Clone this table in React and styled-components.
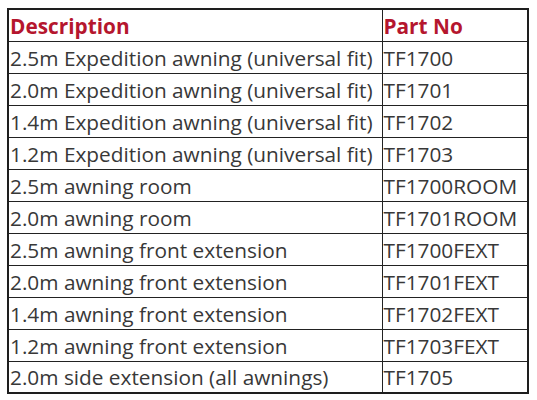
import styled, { createGlobalStyle } from 'styled-components';

const Global = createGlobalStyle`
  body {
    margin: 0;
    background: #ffffff;
    font-family: "Open Sans", "Liberation Sans", sans-serif;
  }
`;

const Page = styled.div`
  padding: 8px 0 0 7px;
`;

const Table = styled.table`
  border-collapse: collapse;
  border: 2px solid #1e1e1e;
  table-layout: fixed;
  width: 520px;
`;

const Col = styled.col`
  width: ${p => p.w}px;
`;

const Cell = styled.td`
  border: 1.5px solid #222;
  height: 32px;
  padding: 2px 0 0 1px;
  box-sizing: border-box;
  font-size: 20.8px;
  line-height: 1;
  color: #383838;
  white-space: nowrap;
  overflow: hidden;
  vertical-align: middle;
  font-variant-ligatures: none;
`;

const Head = styled(Cell).attrs({ as: 'th' })`
  text-align: left;
  font-weight: 700;
  color: #b5162e;
`;

const rows = [
  ['2.5m Expedition awning (universal fit)', 'TF1700'],
  ['2.0m Expedition awning (universal fit)', 'TF1701'],
  ['1.4m Expedition awning (universal fit)', 'TF1702'],
  ['1.2m Expedition awning (universal fit)', 'TF1703'],
  ['2.5m awning room', 'TF1700ROOM'],
  ['2.0m awning room', 'TF1701ROOM'],
  ['2.5m awning front extension', 'TF1700FEXT'],
  ['2.0m awning front extension', 'TF1701FEXT'],
  ['1.4m awning front extension', 'TF1702FEXT'],
  ['1.2m awning front extension', 'TF1703FEXT'],
  ['2.0m side extension (all awnings)', 'TF1705'],
];

export default function App() {
  return (
    <Page>
      <Global />
      <Table>
        <colgroup>
          <Col w={374} />
          <Col w={146} />
        </colgroup>
        <thead>
          <tr>
            <Head>Description</Head>
            <Head>Part No</Head>
          </tr>
        </thead>
        <tbody>
          {rows.map(([desc, part]) => (
            <tr key={part}>
              <Cell>{desc}</Cell>
              <Cell>{part}</Cell>
            </tr>
          ))}
        </tbody>
      </Table>
    </Page>
  );
}
